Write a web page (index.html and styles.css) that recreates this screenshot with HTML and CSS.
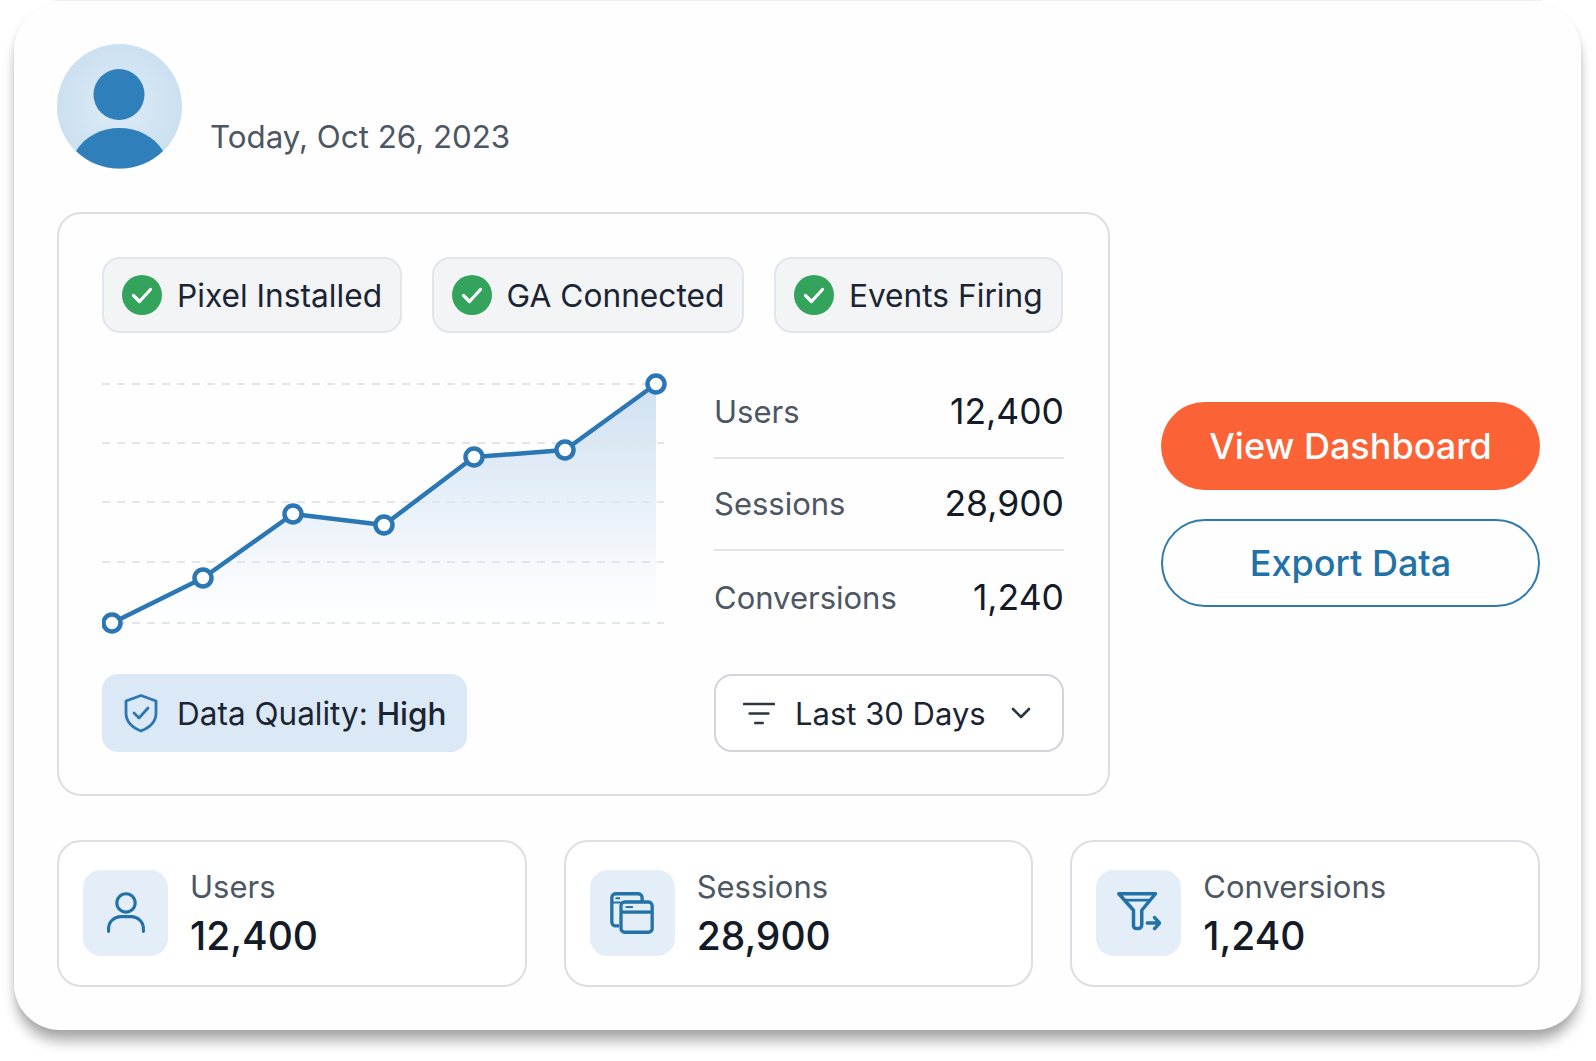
FILE: index.html
```html
<!DOCTYPE html>
<html lang="en">
<head>
<meta charset="utf-8">
<title>Analytics overview</title>
<link rel="stylesheet" href="styles.css">
</head>
<body>
<div class="topline"></div>
<main class="card">
  <header class="header">
    <svg class="avatar" viewBox="0 0 125 125" aria-hidden="true">
      <defs>
        <radialGradient id="avatarBg" cx="50%" cy="50%" r="50%">
          <stop offset="0" stop-color="#dfebf6"/>
          <stop offset="1" stop-color="#cbe0f0"/>
        </radialGradient>
      </defs>
      <circle cx="62.5" cy="62.5" r="62.5" fill="url(#avatarBg)"/>
      <circle cx="62" cy="50.5" r="25.5" fill="#2f7fbb"/>
      <path d="M19 107C28 92 45 84 62.5 84S97 92 106 107A62.5 62.5 0 0 1 19 107Z" fill="#2f7fbb"/>
    </svg>
    <p class="date">Today, Oct 26, 2023</p>
  </header>

  <section class="middle">
    <div class="panel">
      <div class="badges">
        <div class="badge">
          <svg class="check" viewBox="0 0 40 40" aria-hidden="true"><circle cx="20" cy="20" r="20" fill="#34a35c"/><path d="M11.5 20.5l6 6 11-12" fill="none" stroke="#fff" stroke-width="3.2" stroke-linecap="round" stroke-linejoin="round"/></svg>
          <span>Pixel Installed</span>
        </div>
        <div class="badge">
          <svg class="check" viewBox="0 0 40 40" aria-hidden="true"><circle cx="20" cy="20" r="20" fill="#34a35c"/><path d="M11.5 20.5l6 6 11-12" fill="none" stroke="#fff" stroke-width="3.2" stroke-linecap="round" stroke-linejoin="round"/></svg>
          <span>GA Connected</span>
        </div>
        <div class="badge">
          <svg class="check" viewBox="0 0 40 40" aria-hidden="true"><circle cx="20" cy="20" r="20" fill="#34a35c"/><path d="M11.5 20.5l6 6 11-12" fill="none" stroke="#fff" stroke-width="3.2" stroke-linecap="round" stroke-linejoin="round"/></svg>
          <span>Events Firing</span>
        </div>
      </div>

      <div class="data-row">
        <svg class="chart" viewBox="0 0 570 278" aria-hidden="true">
          <defs>
            <linearGradient id="areaFill" x1="0" y1="0" x2="0" y2="1">
              <stop offset="0" stop-color="#d0e0f0"/>
              <stop offset="0.4" stop-color="#e3edf7"/>
              <stop offset="0.85" stop-color="#fbfcfe"/>
              <stop offset="1" stop-color="#ffffff"/>
            </linearGradient>
          </defs>
          <path d="M10 257L101 212L191 148L282 159L371 91L463 84L554 18V262H10Z" fill="url(#areaFill)"/>
          <g stroke="#e2e5e9" stroke-width="2" stroke-dasharray="8 7">
            <path d="M0 18H562"/>
            <path d="M0 77H562"/>
            <path d="M0 136H562"/>
            <path d="M0 196H562"/>
            <path d="M0 257H562"/>
          </g>
          <path d="M10 257L101 212L191 148L282 159L372 91L463 84L554 18" fill="none" stroke="#2b77b3" stroke-width="4.5" stroke-linejoin="round"/>
          <g fill="#fff" stroke="#2b77b3" stroke-width="4.5">
            <circle cx="10" cy="257" r="8.500"/>
            <circle cx="101" cy="212" r="8.500"/>
            <circle cx="191" cy="148" r="8.500"/>
            <circle cx="282" cy="159" r="8.500"/>
            <circle cx="372" cy="91" r="8.500"/>
            <circle cx="463" cy="84" r="8.500"/>
            <circle cx="554" cy="18" r="8.500"/>
          </g>
        </svg>
        <dl class="stats">
          <div class="stat"><dt>Users</dt><dd>12,400</dd></div>
          <div class="stat"><dt>Sessions</dt><dd>28,900</dd></div>
          <div class="stat"><dt>Conversions</dt><dd>1,240</dd></div>
        </dl>
      </div>

      <div class="controls">
        <div class="quality">
          <svg class="shield" viewBox="0 0 36 40" aria-hidden="true"><path d="M18 2.500L33 8v12c0 9-6.200 14.500-15 18C9.200 34.500 3 29 3 20V8Z" fill="none" stroke="#2b77b3" stroke-width="2.800" stroke-linejoin="round"/><path d="M11 20l5 5 9-10" fill="none" stroke="#2b77b3" stroke-width="2.800" stroke-linecap="round" stroke-linejoin="round"/></svg>
          <span>Data Quality: <b>High</b></span>
        </div>
        <div class="select">
          <svg class="filter" viewBox="0 0 34 26" aria-hidden="true"><path d="M1 3H33M7 13H27M13 23H21" fill="none" stroke="#2c3645" stroke-width="2.600" stroke-linecap="round"/></svg>
          <span>Last 30 Days</span>
          <svg class="chevron" viewBox="0 0 20 12" aria-hidden="true"><path d="M2 2l8 8 8-8" fill="none" stroke="#2c3645" stroke-width="2.600" stroke-linecap="round" stroke-linejoin="round"/></svg>
        </div>
      </div>
    </div>

    <div class="actions">
      <button class="btn btn-primary" type="button">View Dashboard</button>
      <button class="btn btn-outline" type="button">Export Data</button>
    </div>
  </section>

  <section class="tiles">
    <article class="tile">
      <div class="tile-icon">
        <svg class="glyph" viewBox="0 0 48 48" aria-hidden="true"><circle cx="24" cy="13" r="10" fill="none" stroke="#2272a8" stroke-width="3.400"/><path d="M5 44v-3c0-8 7-13 13-13h12c6 0 13 5 13 13v3" fill="none" stroke="#2272a8" stroke-width="3.400" stroke-linecap="round"/></svg>
      </div>
      <div class="tile-text"><span class="tile-label">Users</span><strong class="tile-value">12,400</strong></div>
    </article>
    <article class="tile">
      <div class="tile-icon">
        <svg class="glyph" viewBox="0 0 48 48" aria-hidden="true"><path d="M10 38H6a4 4 0 0 1-4-4V7a4 4 0 0 1 4-4h25a4 4 0 0 1 4 4v5" fill="none" stroke="#2272a8" stroke-width="3.600"/><path d="M2 12.500H12M6 8H11" fill="none" stroke="#2272a8" stroke-width="2.200"/><rect x="12" y="12" width="34" height="33" rx="4" fill="none" stroke="#2272a8" stroke-width="3.600"/><path d="M12 23H46" stroke="#2272a8" stroke-width="3.600"/><path d="M17 17.500H25" stroke="#2272a8" stroke-width="2.200"/></svg>
      </div>
      <div class="tile-text"><span class="tile-label">Sessions</span><strong class="tile-value">28,900</strong></div>
    </article>
    <article class="tile">
      <div class="tile-icon">
        <svg class="glyph" viewBox="0 0 48 48" aria-hidden="true"><path d="M2 3H42L27 21V37a4 4 0 0 1-4 4H21a3 3 0 0 1-3-3V21Z" fill="none" stroke="#2272a8" stroke-width="3.800" stroke-linejoin="round"/><path d="M8 10H36" stroke="#2272a8" stroke-width="3"/><path d="M33 35H46M41 29l5.500 6-5.500 6" fill="none" stroke="#2272a8" stroke-width="3.800" stroke-linecap="round" stroke-linejoin="round"/></svg>
      </div>
      <div class="tile-text"><span class="tile-label">Conversions</span><strong class="tile-value">1,240</strong></div>
    </article>
  </section>
</main>
</body>
</html>
```

FILE: styles.css
```css
* { box-sizing: border-box; }

html, body { margin: 0; padding: 0; }

body {
  width: 1596px;
  height: 1061px;
  overflow: hidden;
  background: #fff;
  font-family: Inter, "Liberation Sans", sans-serif;
  color: #1b2433;
}

.topline {
  height: 1px;
  margin: 0 54px 3px;
  background: #eeeff2;
}

.card {
  width: 1567px;
  height: 1026px;
  margin-left: 14px;
  padding: 39px 41px 0 43px;
  background: #fefefe;
  border-radius: 46px;
  box-shadow: 0 13px 13px -2px rgba(0, 0, 0, 0.32), 0 2px 6px rgba(0, 0, 0, 0.07);
}

.header {
  display: flex;
  align-items: flex-end;
  gap: 28px;
  height: 126px;
}

.avatar { width: 125px; height: 125px; flex: none; }

.date {
  margin: 0 0 13px;
  font-size: 31.3px;
  line-height: 38px;
  color: #4d5663;
}

.middle {
  display: flex;
  align-items: center;
  justify-content: space-between;
  margin-top: 43px;
}

.panel {
  width: 1053px;
  height: 584px;
  padding: 43px 43px 0;
  border: 2px solid #dcdee4;
  border-radius: 24px;
}

.badges { display: flex; gap: 29.5px; }

.badge {
  display: flex;
  align-items: center;
  gap: 15px;
  height: 76px;
  padding: 0 18px;
  background: #f3f4f6;
  border: 2px solid #e3e5ea;
  border-radius: 18px;
  font-size: 31.7px;
  white-space: nowrap;
  color: #1b2433;
}

.check { width: 40px; height: 40px; flex: none; }

.data-row {
  display: grid;
  grid-template-columns: 570px 350px;
  column-gap: 42px;
  margin-top: 33px;
  height: 278px;
}

.chart { display: block; width: 570px; height: 278px; }

.stats {
  display: grid;
  grid-template-rows: repeat(3, 1fr);
  margin: 0;
}

.stat {
  display: flex;
  align-items: center;
  justify-content: space-between;
  border-bottom: 2px solid #e2e4e8;
}

.stat:last-child { border-bottom: 0; }

.stat dt { font-size: 31px; color: #4d5663; }

.stat dd { margin: 0; font-size: 35.5px; color: #131b29; }

.controls {
  display: grid;
  grid-template-columns: 570px 350px;
  column-gap: 42px;
  margin-top: 30px;
}

.quality {
  display: flex;
  align-items: center;
  gap: 18px;
  justify-self: start;
  width: 365px;
  height: 78px;
  padding-left: 21px;
  background: #dbe9f6;
  border-radius: 16px;
  font-size: 31.5px;
  color: #1b2433;
}

.quality b { font-weight: 500; }

.shield { width: 36px; height: 40px; flex: none; }

.select {
  display: flex;
  align-items: center;
  height: 78px;
  padding: 0 31px 0 27px;
  background: #fff;
  border: 2px solid #d2d4da;
  border-radius: 18px;
  font-size: 31px;
  color: #1b2433;
}

.filter { width: 32px; height: 25px; flex: none; margin-right: 20px; }

.chevron { width: 20px; height: 12px; flex: none; margin-left: auto; }

.actions {
  display: flex;
  flex-direction: column;
  gap: 29px;
  width: 379px;
}

.btn {
  width: 100%;
  height: 88px;
  border-radius: 44px;
  font-family: inherit;
  font-size: 36px;
  font-weight: 500;
  background: none;
}

.btn-primary { background: #fb6236; border: 0; color: #fff; }

.btn-outline { border: 2.5px solid #2f7aae; color: #2272a8; }

.tiles {
  display: grid;
  grid-template-columns: repeat(3, 1fr);
  gap: 37px;
  margin-top: 44px;
}

.tile {
  display: flex;
  align-items: center;
  gap: 22px;
  height: 147px;
  padding: 0 0 1px 24px;
  background: #fff;
  border: 2px solid #dcdee4;
  border-radius: 24px;
}

.tile-icon {
  display: flex;
  align-items: center;
  justify-content: center;
  width: 85px;
  height: 86px;
  flex: none;
  background: #e3eef8;
  border-radius: 18px;
}

.glyph { width: 44px; height: 44px; }

.tile-text { display: flex; flex-direction: column; gap: 2px; padding-top: 3px; }

.tile-label { font-size: 31px; line-height: 40px; color: #4d5663; }

.tile-value { font-size: 39px; line-height: 54px; font-weight: 500; color: #131b29; }
```
